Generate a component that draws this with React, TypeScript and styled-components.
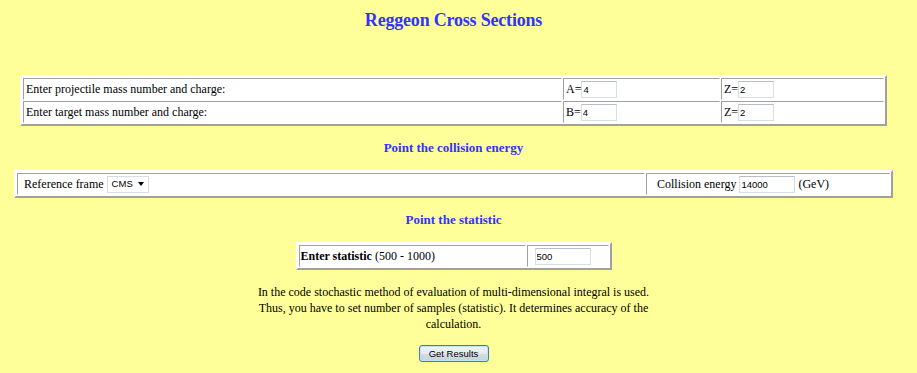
import styled, { createGlobalStyle } from "styled-components";

const GlobalStyle = createGlobalStyle`
  html, body {
    margin: 0;
    padding: 0;
    background: #ffff99;
  }
  body {
    font-family: "Liberation Serif", "Times New Roman", serif;
    font-size: 12px;
    color: #000;
  }
`;

const App = () => {
  return (
    <>
      <GlobalStyle />
      <Page>
        <Title>Reggeon Cross Sections</Title>

        <Panel $width={867} $cols="539px 157px 163px" $top={44}>
          <Cell>Enter projectile mass number and charge:</Cell>
          <Cell>
            A=<TextInput $w={36} defaultValue="4" />
          </Cell>
          <Cell>
            Z=<TextInput $w={36} defaultValue="2" />
          </Cell>
          <Cell>Enter target mass number and charge:</Cell>
          <Cell>
            B=<TextInput $w={36} defaultValue="4" />
          </Cell>
          <Cell>
            Z=<TextInput $w={36} defaultValue="2" />
          </Cell>
        </Panel>

        <SectionHeading>Point the collision energy</SectionHeading>

        <Panel $width={879} $cols="628px 244px">
          <Cell $pad={6}>
            Reference frame
            <SelectBox>
              CMS
              <Arrow />
            </SelectBox>
          </Cell>
          <Cell $pad={10}>
            Collision energy
            <TextInput $w={56} $gap={3} defaultValue="14000" />
            &nbsp;(GeV)
          </Cell>
        </Panel>

        <SectionHeading>Point the statistic</SectionHeading>

        <Panel $width={316} $cols="227px 82px">
          <Cell $pad={1}>
            <b>Enter statistic</b>&nbsp;(500 - 1000)
          </Cell>
          <Cell $pad={7}>
            <TextInput $w={56} defaultValue="500" />
          </Cell>
        </Panel>

        <Note>
          In the code stochastic method of evaluation of multi-dimensional
          integral is used. Thus, you have to set number of samples
          (statistic). It determines accuracy of the calculation.
        </Note>

        <SubmitButton type="button">Get Results</SubmitButton>
      </Page>
    </>
  );
};

const Page = styled.div`
  width: 907px;
  display: flex;
  flex-direction: column;
  align-items: center;
  padding-top: 9px;
`;

const Title = styled.h1`
  margin: 0;
  font-size: 18px;
  line-height: 22px;
  font-weight: bold;
  color: #3333ff;
  text-align: center;
  letter-spacing: -0.2px;
`;

const Panel = styled.div<{ $width: number; $cols: string; $top?: number }>`
  display: grid;
  grid-template-columns: ${({ $cols }) => $cols};
  gap: 1px;
  width: ${({ $width }) => $width}px;
  box-sizing: border-box;
  margin-top: ${({ $top }) => $top ?? 0}px;
  padding: 1px;
  background: #fff;
  border: 2px solid;
  border-color: #ffffff #a0a0a0 #a0a0a0 #ffffff;
`;

const Cell = styled.div<{ $pad?: number }>`
  display: flex;
  align-items: center;
  height: 22px;
  box-sizing: border-box;
  padding: 0 2px 0 ${({ $pad }) => $pad ?? 2}px;
  border: 1px solid;
  border-color: #a0a0a0 #ffffff #ffffff #a0a0a0;
  white-space: nowrap;
  line-height: 16px;
`;

const TextInput = styled.input<{ $w: number; $gap?: number }>`
  width: ${({ $w }) => $w}px;
  height: 17px;
  box-sizing: border-box;
  margin: 0 0 0 ${({ $gap }) => $gap ?? 0}px;
  padding: 0 1px;
  border: 1px solid #d8dce3;
  border-top-color: #b9bdc5;
  background: #fff;
  font-family: "Liberation Sans", Arial, sans-serif;
  font-size: 9.5px;
  color: #000;
  outline: none;
`;

const SelectBox = styled.span`
  display: inline-flex;
  align-items: center;
  justify-content: space-between;
  width: 42px;
  height: 17px;
  box-sizing: border-box;
  margin-left: 3px;
  padding: 0 4px 0 4px;
  border: 1px solid #d8dce3;
  background: #fff;
  font-family: "Liberation Sans", Arial, sans-serif;
  font-size: 9.5px;
`;

const Arrow = styled.span`
  width: 0;
  height: 0;
  border-left: 3.5px solid transparent;
  border-right: 3.5px solid transparent;
  border-top: 4px solid #000;
`;

const SectionHeading = styled.h2`
  margin: 14px 0;
  font-size: 13px;
  line-height: 16px;
  font-weight: bold;
  color: #3333ff;
  text-align: center;
`;

const Note = styled.p`
  width: 412px;
  margin: 14px 0 13px;
  line-height: 16px;
  text-align: center;
`;

const SubmitButton = styled.button`
  width: 70px;
  height: 17px;
  padding: 0;
  border: 1px solid #3c7fb1;
  border-radius: 3px;
  background: linear-gradient(#f2f4f6 0%, #e6eaee 50%, #d6dde3 51%, #c9d2da 100%);
  box-shadow: inset 0 0 0 1px #bfe3f8;
  font-family: "Liberation Sans", Arial, sans-serif;
  font-size: 9.5px;
  color: #000;
`;

export default App;
